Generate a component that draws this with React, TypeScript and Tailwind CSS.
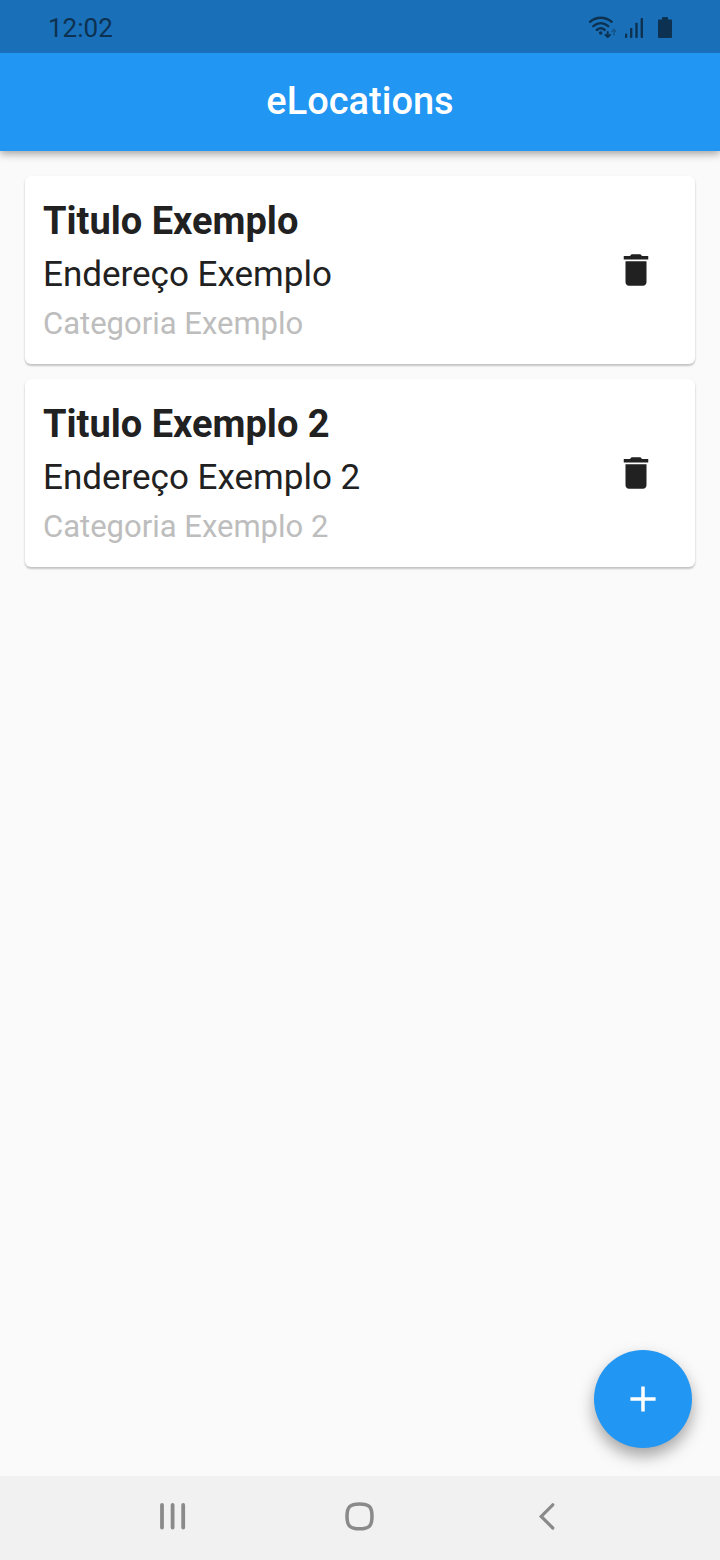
const places = [
  { title: 'Titulo Exemplo', address: 'Endereço Exemplo', category: 'Categoria Exemplo' },
  { title: 'Titulo Exemplo 2', address: 'Endereço Exemplo 2', category: 'Categoria Exemplo 2' },
];

function StatusBar() {
  return (
    <div className="relative z-10 flex h-[53px] items-center justify-between bg-[#1a70b8] px-12 text-[#0d3150]">
      <span className="pt-0.5 text-[26px] leading-8">12:02</span>
      <div className="flex items-center gap-2">
        <svg width="28" height="23" viewBox="0 0 28 23" fill="none" stroke="currentColor" strokeWidth="2.4" strokeLinecap="round">
          <path d="M2 6.800C8.500 1.400 17 1.400 23.600 6.800M5.300 11.200C10 7.200 15.600 7.200 20.200 11.200M8.800 15C11.400 12.600 14.200 12.600 16.800 15" />
          <circle cx="12.700" cy="18" r="1.800" fill="currentColor" stroke="none" />
          <path d="M19.700 17v5M17.400 19.800l2.300 2.300l2.300-2.300" strokeWidth="1.900" />
          <path d="M26 20v-5.500M24 16.500l2-2l2 2" strokeWidth="1.600" opacity=".4" />
        </svg>
        <svg width="20" height="23" viewBox="0 0 20 23" fill="currentColor">
          <rect x="1" y="18.500" width="2.200" height="4.500" rx=".8" />
          <rect x="6" y="13" width="2.400" height="10" rx=".8" />
          <rect x="11.300" y="7.700" width="2.400" height="15.300" rx=".8" />
          <rect x="16.600" y="3" width="2.400" height="20" rx=".8" />
        </svg>
        <svg width="20" height="23" viewBox="0 0 20 23" fill="currentColor">
          <path d="M11 2h4q1 0 1 1v1.500h3q1 0 1 1V22q0 1-1 1H7q-1 0-1-1V5.500q0-1 1-1h3V3q0-1 1-1z" />
        </svg>
      </div>
    </div>
  );
}

function PlaceCard({ title, address, category }: (typeof places)[number]) {
  return (
    <li className="flex items-center justify-between rounded-md bg-white pr-[34px] pl-[18px] shadow-[0_2px_2px_rgba(0,0,0,0.18),0_1px_3px_rgba(0,0,0,0.08)]">
      <div className="pt-[23px] pb-[15px]">
        <h2 className="text-[38px] leading-[44px] font-bold text-[#212121]">{title}</h2>
        <p className="pt-2 text-[35px] leading-[48px] text-[#212121]">{address}</p>
        <p className="text-[31px] leading-[50px] text-[#bdbdbd]">{category}</p>
      </div>
      <button type="button" aria-label="Excluir" className="p-1 text-[#212121]">
        <svg width="42" height="42" viewBox="0 0 24 24" fill="currentColor">
          <path d="M6 19c0 1.100.9 2 2 2h8c1.100 0 2-.9 2-2V7H6v12zM19 4h-3.500l-1-1h-5l-1 1H5v2h14V4z" />
        </svg>
      </button>
    </li>
  );
}

export default function App() {
  return (
    <div className="flex min-h-screen flex-col bg-[#fafafa] font-[Roboto,sans-serif]">
      <StatusBar />
      <header className="flex h-[98px] items-center justify-center bg-[#2196f3] pb-0.5 shadow-[0_3px_8px_rgba(0,0,0,0.35)]">
        <h1 className="text-[38px] leading-[44px] font-medium text-white">eLocations</h1>
      </header>
      <main className="flex flex-1 flex-col justify-between">
        <ul className="flex flex-col gap-[15px] px-[25px] pt-[25px]">
          {places.map((place) => (
            <PlaceCard key={place.title} {...place} />
          ))}
        </ul>
        <div className="flex justify-end p-7">
          <button
            type="button"
            aria-label="Adicionar"
            className="flex size-[98px] items-center justify-center rounded-full bg-[#2196f3] text-white shadow-[0_8px_16px_rgba(0,0,0,0.35)]"
          >
            <svg width="42" height="42" viewBox="0 0 24 24" fill="currentColor">
              <path d="M19.200 13h-6.200v6.200h-2v-6.200H4.800v-2h6.200V4.800h2v6.200h6.200z" />
            </svg>
          </button>
        </div>
      </main>
      <nav className="flex h-[84px] items-center justify-around bg-[#f1f1f1] px-[78px] pb-1 text-[#8a8a8a]">
        <button type="button" aria-label="Recentes">
          <svg width="32" height="32" viewBox="0 0 32 32" fill="none" stroke="currentColor" strokeWidth="3.800" strokeLinecap="round">
            <path d="M6 5v22.500M16.600 5v22.500M27.200 5v22.500" />
          </svg>
        </button>
        <button type="button" aria-label="Início">
          <svg width="32" height="32" viewBox="0 0 32 32" fill="none" stroke="currentColor" strokeWidth="3.500">
            <path d="M15.600 4C25 4 28 6.800 28 16.400S25 28.800 15.600 28.800S3 26 3 16.400S6.200 4 15.600 4z" />
          </svg>
        </button>
        <button type="button" aria-label="Voltar">
          <svg width="32" height="32" viewBox="0 0 32 32" fill="none" stroke="currentColor" strokeWidth="3.200" strokeLinecap="round">
            <path d="M20.800 4.800L9.200 16.400l11.600 11.600" />
          </svg>
        </button>
      </nav>
    </div>
  );
}
